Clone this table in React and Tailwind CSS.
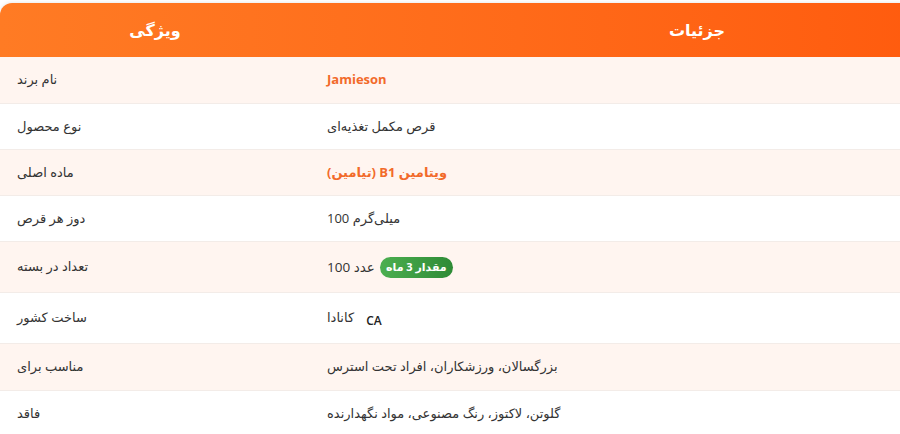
const rows = [
  { label: "نام برند", value: "Jamieson", kind: "brand", h: "h-[47px]", tint: true },
  { label: "نوع محصول", value: "قرص مکمل تغذیه‌ای", h: "h-[46px]" },
  { label: "ماده اصلی", kind: "accent", h: "h-[46px]", tint: true },
  { label: "دوز هر قرص", value: "100 میلی‌گرم", kind: "ltr", h: "h-[46px]" },
  { label: "تعداد در بسته", value: "100 عدد", kind: "badge", h: "h-[51px]", tint: true },
  { label: "ساخت کشور", value: "کانادا", kind: "flag", h: "h-[51px]" },
  { label: "مناسب برای", value: "بزرگسالان، ورزشکاران، افراد تحت استرس", h: "h-[47px]", tint: true },
  { label: "فاقد", value: "گلوتن، لاکتوز، رنگ مصنوعی، مواد نگهدارنده", h: "h-[47px]" },
];

function Value({ row }) {
  if (row.kind === "brand") {
    return <span className="font-bold text-[#f26a2a]">{row.value}</span>;
  }
  if (row.kind === "accent") {
    // (تیامین) B1 ویتامین, read left to right as in the picture
    return (
      <span dir="ltr" className="font-bold text-[#f26a2a]">
        <bdi dir="rtl">(تیامین)</bdi> B1 <bdi dir="rtl">ویتامین</bdi>
      </span>
    );
  }
  if (row.kind === "ltr") {
    return <span dir="ltr">{row.value}</span>;
  }
  if (row.kind === "badge") {
    return (
      <div className="flex items-center gap-[5px]">
        <span dir="ltr" className="text-[13.5px]">{row.value}</span>
        <span
          dir="rtl"
          className="flex h-[21px] w-[73px] items-center justify-center rounded-full bg-gradient-to-r from-[#4caf50] to-[#2e8b36] text-[11px] font-bold text-white"
        >
          مقدار 3 ماه
        </span>
      </div>
    );
  }
  if (row.kind === "flag") {
    return (
      <div className="flex items-center">
        <span dir="rtl">{row.value}</span>
        <span className="ml-[12px] mt-[5px] text-[12px] font-semibold text-[#222]">CA</span>
      </div>
    );
  }
  return <span dir="rtl">{row.value}</span>;
}

export default function App() {
  return (
    <div
      className="h-[434px] w-full overflow-hidden bg-white pt-[3px]"
      style={{ fontFamily: '"Open Sans", "DejaVu Sans", sans-serif' }}
    >
      <div className="w-[1084px] overflow-hidden rounded-tl-xl shadow-[0_0_4px_rgba(0,0,0,0.12)]">
        {/* header */}
        <div className="grid h-[54px] grid-cols-[310px_1fr] items-center bg-gradient-to-r from-[#ff7b24] to-[#ff5508] text-[16px] font-bold text-white">
          <div className="text-center">ویژگی</div>
          <div className="text-center">جزئیات</div>
        </div>

        {rows.map((row) => (
          <div
            key={row.label}
            className={`grid grid-cols-[310px_1fr] items-center border-b border-[#f3ece8] text-[13px] text-[#333] ${row.h} ${
              row.tint ? "bg-[#fff5f0]" : "bg-white"
            }`}
          >
            <div dir="rtl" className="pl-[17px] text-left">
              {row.label}
            </div>
            <div className="flex pl-[17px]">
              <Value row={row} />
            </div>
          </div>
        ))}
      </div>
    </div>
  );
}
